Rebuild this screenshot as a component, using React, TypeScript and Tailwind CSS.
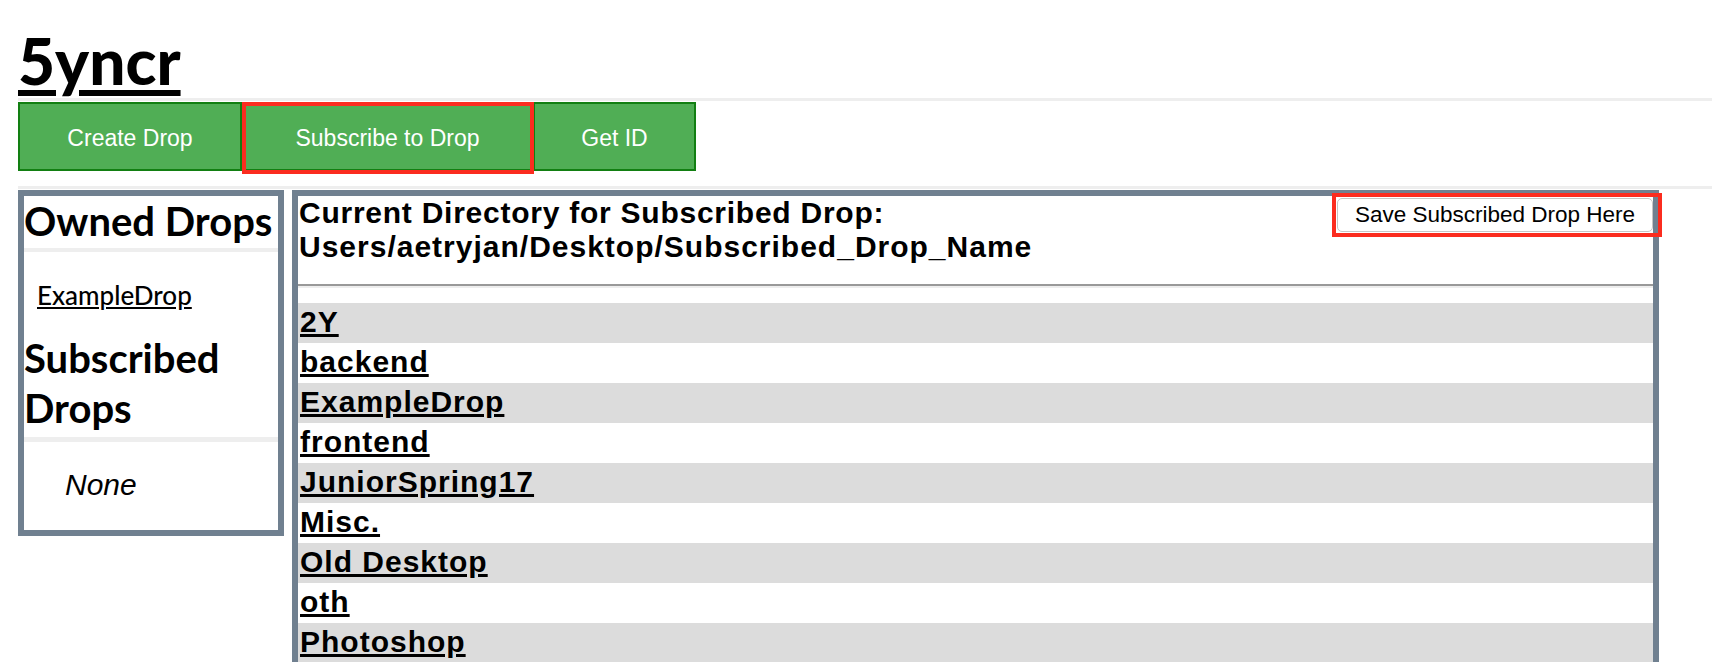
import React from "react";

const rows = [
  "2Y",
  "backend",
  "ExampleDrop",
  "frontend",
  "JuniorSpring17",
  "Misc.",
  "Old Desktop",
  "oth",
  "Photoshop",
];

export default function App() {
  return (
    <div className="min-h-screen bg-white pl-[18px] pr-[14px] text-black">
      <h1 className="pt-[29px] font-['Lato',sans-serif] text-[64px] font-black leading-[64px]">
        <a href="#" className="underline decoration-[6px] underline-offset-[5px]">
          5yncr
        </a>
      </h1>
      <div className="mt-[5px] h-[3px] bg-[#eeeeee]" />

      <div className="mt-[1px] flex items-start font-['Liberation_Sans',Arial,sans-serif] text-[23px] text-white">
        <button className="flex h-[69px] w-[224px] items-center justify-center border-2 border-[#127f12] bg-[#50ae55] pt-[3px]">
          Create Drop
        </button>
        <div className="relative">
          <button className="flex h-[69px] w-[291px] items-center justify-center border-2 border-[#127f12] bg-[#50ae55] pt-[3px]">
            Subscribe to Drop
          </button>
          <div className="pointer-events-none absolute left-0 top-0 right-[-1px] bottom-[-3px] border-4 border-[#fb2c1f]" />
        </div>
        <button className="flex h-[69px] w-[163px] items-center justify-center border-2 border-[#127f12] bg-[#50ae55] pt-[3px]">
          Get ID
        </button>
      </div>
      <div className="mt-[15px] h-[3px] bg-[#eeeeee]" />

      <div className="mt-[1px] flex items-start gap-[8px]">
        {/* Left panel */}
        <div className="w-[266px] border-[6px] border-[#708090] bg-white">
          <h2 className="whitespace-nowrap font-['Lato',sans-serif] text-[40px] font-bold leading-[50px]">
            Owned Drops
          </h2>
          <div className="mt-[2px] h-[4px] bg-[#eeeeee]" />
          <div className="pb-[23px] pl-[13px] pt-[28px] font-['Lato',sans-serif] text-[26px] font-medium leading-[30px]">
            <a href="#" className="underline">
              ExampleDrop
            </a>
          </div>
          <h2 className="font-['Lato',sans-serif] text-[40px] font-bold leading-[50px]">
            Subscribed Drops
          </h2>
          <div className="mt-[4px] h-[5px] bg-[#eeeeee]" />
          <div className="pb-[27px] pl-[41px] pt-[25px] font-['Liberation_Sans',Arial,sans-serif] text-[30px] italic leading-[36px]">
            None
          </div>
        </div>

        {/* Right panel */}
        <div className="w-[1367px] border-[6px] border-[#708090] bg-white font-['Liberation_Sans',Arial,sans-serif]">
          <div className="flex items-start justify-between">
            <h3 className="pl-[1px] text-[30px] font-bold leading-[34px]">
              <span className="tracking-[0.75px]">Current Directory for Subscribed Drop:</span>
              <br />
              <span className="tracking-[1px]">Users/aetryjan/Desktop/Subscribed_Drop_Name</span>
            </h3>
            <div className="relative mt-[2px]">
              <button className="flex h-[34px] w-[316px] items-center justify-center rounded-[5px] border border-[#c6c6c6] bg-white text-[22.5px] text-black">
                Save Subscribed Drop Here
              </button>
              <div className="pointer-events-none absolute left-[-5px] top-[-5px] right-[-9px] bottom-[-5px] border-4 border-[#fb2c1f]" />
            </div>
          </div>
          <div className="mt-[20px] h-[2px] bg-[#999999]" />
          <div className="h-[2px] bg-[#eeeeee]" />
          <div className="mt-[15px]">
            {rows.map((r, i) => (
              <div
                key={r}
                className={
                  i % 2 === 0
                    ? "h-[40px] bg-[#dcdcdc] pl-[2px] text-[30px] font-bold leading-[37px] tracking-[1px]"
                    : "h-[40px] bg-white pl-[2px] text-[30px] font-bold leading-[37px] tracking-[1px]"
                }
              >
                <a href="#" className="underline">
                  {r}
                </a>
              </div>
            ))}
          </div>
        </div>
      </div>
    </div>
  );
}
